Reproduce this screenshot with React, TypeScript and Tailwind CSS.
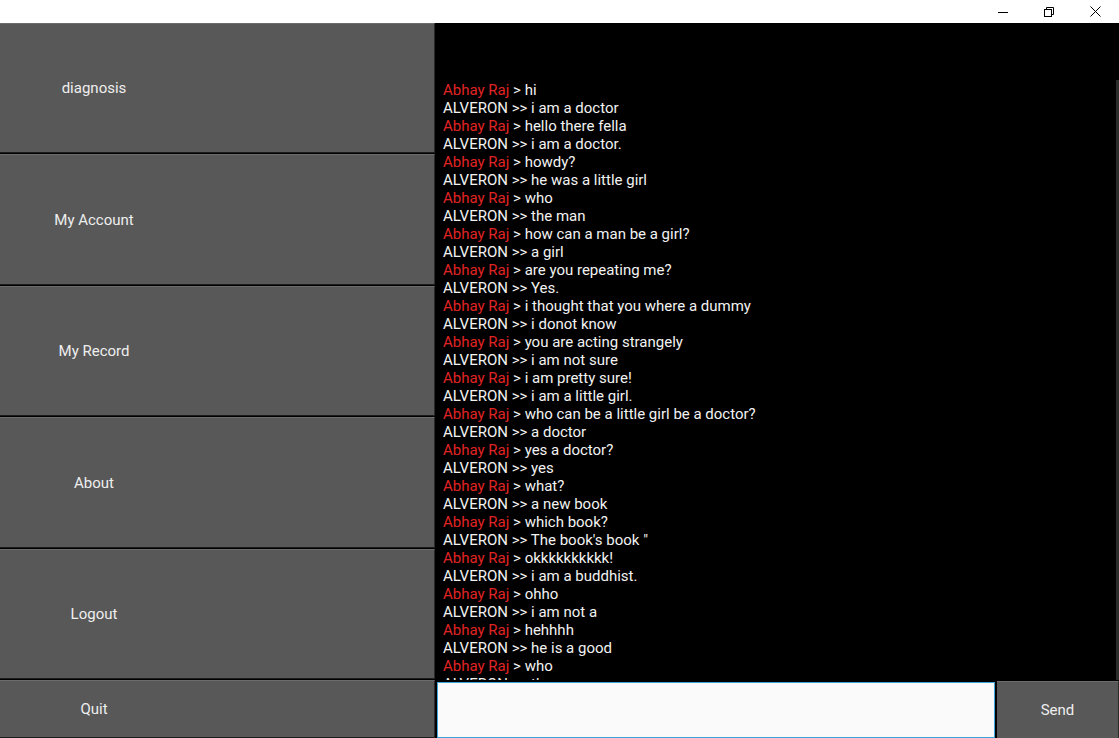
import React from "react";

const pairs: [string, string][] = [
  ["hi", "i am a doctor"],
  ["hello there fella", "i am a doctor."],
  ["howdy?", "he was a little girl"],
  ["who", "the man"],
  ["how can a man be a girl?", "a girl"],
  ["are you repeating me?", "Yes."],
  ["i thought that you where a dummy", "i donot know"],
  ["you are acting strangely", "i am not sure"],
  ["i am pretty sure!", "i am a little girl."],
  ["who can be a little girl be a doctor?", "a doctor"],
  ["yes a doctor?", "yes"],
  ["what?", "a new book"],
  ["which book?", "The book's book \""],
  ["okkkkkkkkkk!", "i am a buddhist."],
  ["ohho", "i am not a"],
  ["hehhhh", "he is a good"],
  ["who", "the man"],
];

function SideButton({ label }: { label: string }) {
  return (
    <div className="flex-1 flex items-center bg-[#585858] border-t border-t-[#6c6c6c] border-b border-b-[#1c1c1c] border-r border-r-[#2a2a2a] mb-px">
      <div className="w-[188px] text-center text-[15px] text-[#eeeeee] pt-px">{label}</div>
    </div>
  );
}

export default function App() {
  return (
    <div
      className="w-[1119px] h-[738px] flex flex-col overflow-hidden bg-black"
      style={{ fontFamily: "Roboto, 'Noto Sans', sans-serif" }}
    >
      <div className="h-[23px] bg-white flex justify-end items-center text-black">
        <div className="w-[46px] h-[23px] flex items-center justify-center">
          <svg width="10" height="10" viewBox="0 0 10 10">
            <path d="M0 5.5h10" stroke="#000" strokeWidth="1" />
          </svg>
        </div>
        <div className="w-[46px] h-[23px] flex items-center justify-center">
          <svg width="10" height="10" viewBox="0 0 10 10" fill="none">
            <rect x="0.5" y="2.5" width="7" height="7" stroke="#000" strokeWidth="1" />
            <path d="M2.5 2.5V0.5h7v7h-2" stroke="#000" strokeWidth="1" />
          </svg>
        </div>
        <div className="w-[46px] h-[23px] flex items-center justify-center mr-px">
          <svg width="11" height="11" viewBox="0 0 11 11">
            <path d="M0.5 0.5l10 10M10.5 0.5l-10 10" stroke="#000" strokeWidth="1" />
          </svg>
        </div>
      </div>
      <div className="flex-1 flex min-h-0">
        <div className="w-[435px] flex flex-col">
          <SideButton label="diagnosis" />
          <SideButton label="My Account" />
          <SideButton label="My Record" />
          <SideButton label="About" />
          <SideButton label="Logout" />
        </div>
        <div className="flex-1 relative overflow-hidden bg-black">
          <div className="pt-[58px] pl-[8px] text-[15px] leading-[18px]">
            {pairs.map(([u, b], i) => (
              <React.Fragment key={i}>
                <div className="text-[#f2f2f2] whitespace-pre">
                  <span className="text-[#e02424]">Abhay Raj</span> &gt; {u}
                </div>
                <div className="text-[#f2f2f2] whitespace-pre">ALVERON &gt;&gt; {b}</div>
              </React.Fragment>
            ))}
          </div>
          <div className="absolute right-0 top-[57px] bottom-0 w-[3px] bg-[#2c2c2c]" />
        </div>
      </div>
      <div className="h-[58px] flex">
        <div className="w-[435px] flex items-center bg-[#585858] border-t border-t-[#6c6c6c] border-b border-b-[#1c1c1c] border-r border-r-[#2a2a2a]">
          <div className="w-[188px] text-center text-[15px] text-[#eeeeee] pt-px">Quit</div>
        </div>
        <div className="w-[560px] pl-[2px] pt-[2px] bg-black">
          <div className="h-full bg-[#fafafa] border-[1.5px] border-[#3ca3db]" />
        </div>
        <div className="flex-1 ml-[2px] pt-px bg-black">
          <div className="h-full flex items-center justify-center bg-[#585858] border-t border-t-[#6c6c6c] border-r border-r-[#2a2a2a] text-[15px] text-[#eeeeee]">
            Send
          </div>
        </div>
      </div>
    </div>
  );
}
